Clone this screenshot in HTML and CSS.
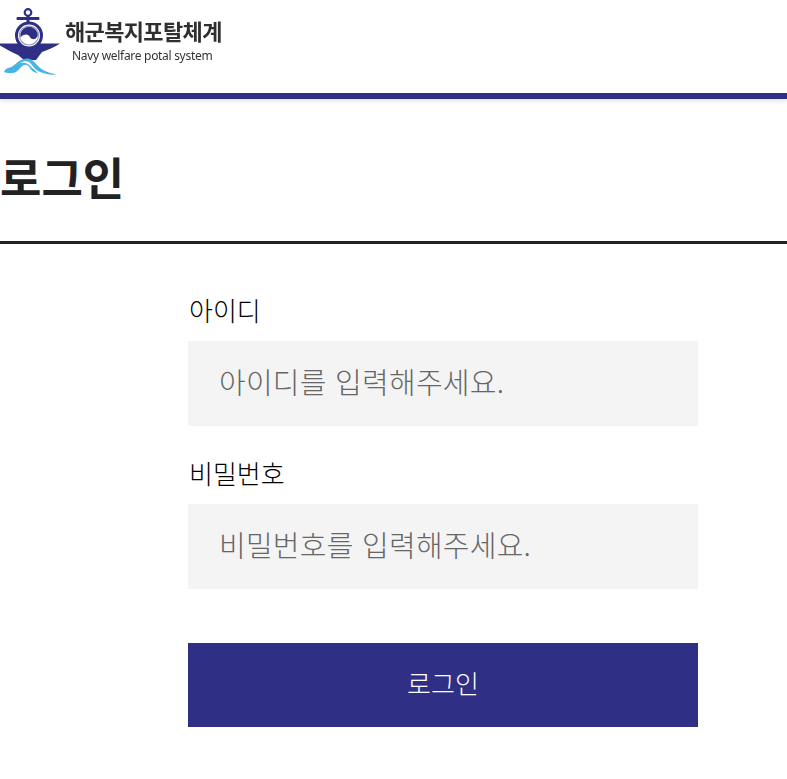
FILE: index.html
```html
<!DOCTYPE html>
<html lang="ko">
<head>
<meta charset="utf-8">
<title>로그인</title>
<link rel="stylesheet" href="styles.css">
</head>
<body>
<header class="site-header">
  <div class="logo">
    <svg class="logo-mark" width="62" height="76" viewBox="0 0 62 76" aria-hidden="true">
      <path d="M-1 43.500H60C55 47 48 50 42 52L36 60H24L18 55C11 52 4 48-1 45z" fill="#2f2f85"/>
      <circle cx="28" cy="12.500" r="3.300" fill="none" stroke="#2f2f85" stroke-width="2.200"/>
      <rect x="16.500" y="17" width="23" height="3" rx="1" fill="#2f2f85"/>
      <rect x="26.500" y="15" width="3" height="9" fill="#2f2f85"/>
      <circle cx="29" cy="35.500" r="12.500" fill="#fff" stroke="#2f2f85" stroke-width="3"/>
      <circle cx="29" cy="35.500" r="9.500" fill="#fff" stroke="#9a9ac0" stroke-width="1.200"/>
      <path d="M20.500 37.500a8.800 8.800 0 0 1 17-4.500c1 3.800-2 6.800-5 6-3-.8-2.500-3.800-5.500-4.300-2.500-.4-5 .8-6.500 2.800z" fill="#2f2f85"/>
      <path d="M4 72c1-3 3-4 6-4.500 4-1 6-5 11-7.500 4-2 8-2 11 0 4 3 6 7 11 10 4 2 9 4 14 4.500-7 .5-13-.5-18-3-2-1-3-2-5-3.500 1 2 2 4 4 5.500-4-1-7-3-9-7-2-2-4-2-6-1-3 2-4 5-8 7-3 1-8 1-11-.5z" fill="#46b4e4"/>
      <path d="M20 63c3-2 6-2.500 9-1 3 2 4 5 7 8-4-1-5-4-8-6-3-1.500-5-1.500-8-1z" fill="#fff"/>
    </svg>
    <div class="logo-text">
      <div class="logo-ko">해군복지포탈체계</div>
      <div class="logo-en">Navy welfare potal system</div>
    </div>
  </div>
</header>
<main>
  <h1 class="page-title">로그인</h1>
  <form class="login-form">
    <label class="field-label" for="uid">아이디</label>
    <input class="field-input" id="uid" type="text" placeholder="아이디를 입력해주세요.">
    <label class="field-label second" for="pwd">비밀번호</label>
    <input class="field-input" id="pwd" type="password" placeholder="비밀번호를 입력해주세요.">
    <button class="submit" type="button">로그인</button>
  </form>
</main>
</body>
</html>
```
FILE: styles.css
```css
* { box-sizing: border-box; }
html, body { margin: 0; padding: 0; background: #fff; }
body {
  font-family: "Noto Sans CJK KR", "Noto Sans", sans-serif;
  color: #000;
  overflow: hidden;
  height: 779px;
}
.site-header {
  height: 99px;
  border-bottom: 6px solid #2f2f85;
  box-shadow: 0 2px 5px rgba(0,0,0,.12);
}
.logo { display: flex; align-items: flex-start; height: 93px; }
.logo-mark { flex: none; display: block; filter: blur(.35px); }
.logo-text { margin: 14px 0 0 3px; filter: blur(.35px); }
.logo-ko {
  font-size: 22px;
  line-height: 32px;
  font-weight: 700;
  letter-spacing: -0.65px;
  color: #2f2f2f;
  white-space: nowrap;
}
.logo-en {
  font-family: "Noto Sans", sans-serif;
  font-size: 12px;
  line-height: 15px;
  margin: 2px 0 0 7px;
  letter-spacing: -0.3px;
  color: #333;
  white-space: nowrap;
}
.page-title {
  margin: 0;
  height: 145px;
  padding-top: 47px;
  border-bottom: 3px solid #222;
  font-size: 45px;
  line-height: 62px;
  font-weight: 700;
  color: #222;
}
.login-form {
  width: 510px;
  margin: 0 0 0 188px;
  padding-top: 48px;
  display: flex;
  flex-direction: column;
}
.field-label {
  font-size: 26px;
  font-weight: 300;
  line-height: 36px;
  height: 49px;
  color: #000;
  padding-left: 1px;
}
.field-label.second { margin-top: 29px; }
.field-input {
  height: 85px;
  border: 0;
  outline: 0;
  background: #f4f4f4;
  padding: 0 31px 5px;
  font-family: inherit;
  font-weight: 300;
  font-size: 29px;
  letter-spacing: .25px;
  color: #222;
}
.field-input::placeholder { color: #666; opacity: 1; }
.submit {
  margin-top: 54px;
  height: 84px;
  border: 0;
  background: #2f2f85;
  color: #fff;
  font-family: inherit;
  font-weight: 300;
  font-size: 26px;
  padding-bottom: 6px;
}
```
